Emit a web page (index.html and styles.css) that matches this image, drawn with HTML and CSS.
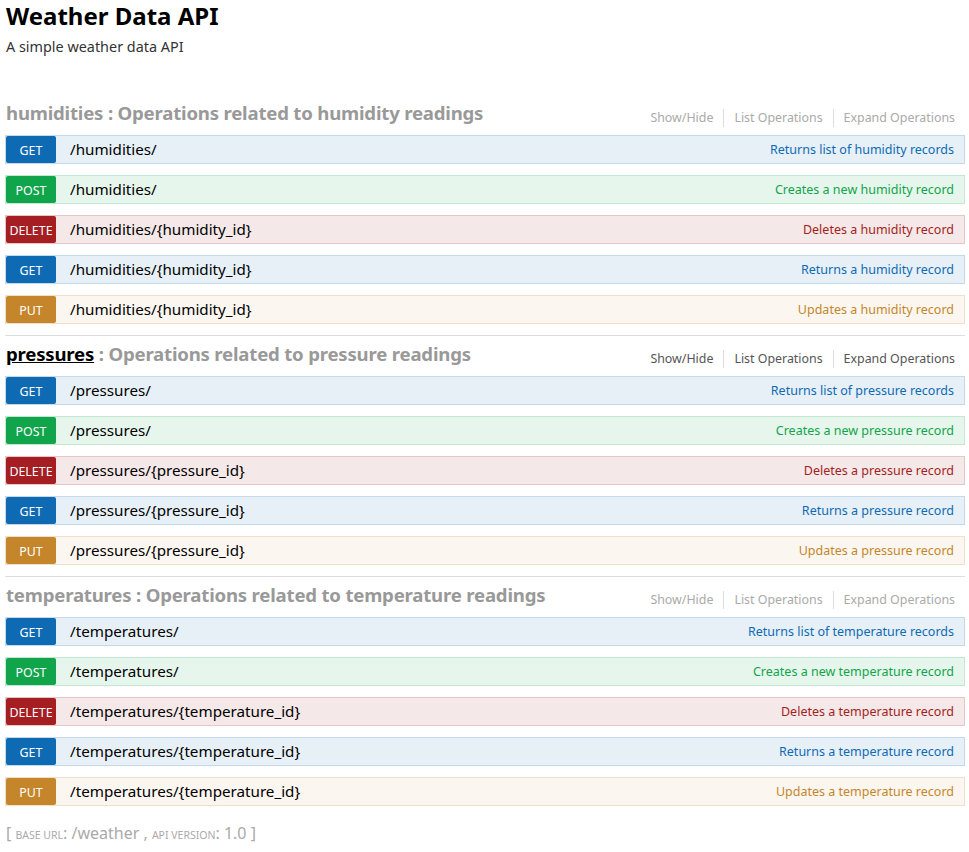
FILE: index.html
```html
<!DOCTYPE html>
<html>
<head>
<meta charset="utf-8">
<title>Weather Data API</title>
<link rel="stylesheet" href="styles.css">
</head>
<body>
<div class="wrap">
  <div class="info">
    <h1 class="info-title">Weather Data API</h1>
    <div class="info-desc">A simple weather data API</div>
  </div>
  <ul class="resources">
    <li class="resource">
      <div class="res-head">
        <h2 class="res-title"><a class="res-name">humidities</a> : Operations related to humidity readings</h2>
        <ul class="options">
          <li>Show/Hide</li>
          <li>List Operations</li>
          <li>Expand Operations</li>
        </ul>
      </div>
      <ul class="ops">
        <li class="op get"><span class="method">GET</span><span class="path">/humidities/</span><span class="summary">Returns list of humidity records</span></li>
        <li class="op post"><span class="method">POST</span><span class="path">/humidities/</span><span class="summary">Creates a new humidity record</span></li>
        <li class="op delete"><span class="method">DELETE</span><span class="path">/humidities/{humidity_id}</span><span class="summary">Deletes a humidity record</span></li>
        <li class="op get"><span class="method">GET</span><span class="path">/humidities/{humidity_id}</span><span class="summary">Returns a humidity record</span></li>
        <li class="op put"><span class="method">PUT</span><span class="path">/humidities/{humidity_id}</span><span class="summary">Updates a humidity record</span></li>
      </ul>
    </li>
    <li class="resource active">
      <div class="res-head">
        <h2 class="res-title"><a class="res-name">pressures</a> : Operations related to pressure readings</h2>
        <ul class="options">
          <li>Show/Hide</li>
          <li>List Operations</li>
          <li>Expand Operations</li>
        </ul>
      </div>
      <ul class="ops">
        <li class="op get"><span class="method">GET</span><span class="path">/pressures/</span><span class="summary">Returns list of pressure records</span></li>
        <li class="op post"><span class="method">POST</span><span class="path">/pressures/</span><span class="summary">Creates a new pressure record</span></li>
        <li class="op delete"><span class="method">DELETE</span><span class="path">/pressures/{pressure_id}</span><span class="summary">Deletes a pressure record</span></li>
        <li class="op get"><span class="method">GET</span><span class="path">/pressures/{pressure_id}</span><span class="summary">Returns a pressure record</span></li>
        <li class="op put"><span class="method">PUT</span><span class="path">/pressures/{pressure_id}</span><span class="summary">Updates a pressure record</span></li>
      </ul>
    </li>
    <li class="resource">
      <div class="res-head">
        <h2 class="res-title"><a class="res-name">temperatures</a> : Operations related to temperature readings</h2>
        <ul class="options">
          <li>Show/Hide</li>
          <li>List Operations</li>
          <li>Expand Operations</li>
        </ul>
      </div>
      <ul class="ops">
        <li class="op get"><span class="method">GET</span><span class="path">/temperatures/</span><span class="summary">Returns list of temperature records</span></li>
        <li class="op post"><span class="method">POST</span><span class="path">/temperatures/</span><span class="summary">Creates a new temperature record</span></li>
        <li class="op delete"><span class="method">DELETE</span><span class="path">/temperatures/{temperature_id}</span><span class="summary">Deletes a temperature record</span></li>
        <li class="op get"><span class="method">GET</span><span class="path">/temperatures/{temperature_id}</span><span class="summary">Returns a temperature record</span></li>
        <li class="op put"><span class="method">PUT</span><span class="path">/temperatures/{temperature_id}</span><span class="summary">Updates a temperature record</span></li>
      </ul>
    </li>
  </ul>
  <div class="footer">[ <span class="sc">base url</span>: /weather , <span class="sc">api version</span>: 1.0 ]</div>
</div>
</body>
</html>
```

FILE: styles.css
```css
* { box-sizing: border-box; }
html, body { margin: 0; padding: 0; background: #fff; }
body {
  font-family: "Noto Sans", "Open Sans", "DejaVu Sans", sans-serif;
  color: #333;
}
.wrap {
  width: 960px;
  margin-left: 5px;
}
.info { padding: 0 1px; }
.info-title {
  margin: 0;
  font-size: 24px;
  line-height: 32px;
  font-weight: bold;
  color: #000;
}
.info-desc {
  margin-top: 5px;
  font-size: 14.4px;
  line-height: 20px;
  color: #333;
}
.resources {
  list-style: none;
  margin: 38px 0 0;
  padding: 0;
}
.resource {
  border-bottom: 1px solid #ddd;
}
.resource:last-child { border-bottom: none; }
.res-head {
  display: flex;
  justify-content: space-between;
  align-items: flex-start;
  height: 40px;
}
.res-title {
  margin: 0;
  padding: 6px 0 0 1px;
  font-size: 18.6px;
  letter-spacing: -0.2px;
  line-height: 24px;
  font-weight: bold;
  color: #999;
}
.res-name { color: #999; text-decoration: none; }
.active .res-name { color: #000; text-decoration: underline; }
.options {
  list-style: none;
  display: flex;
  margin: 0;
  padding: 14px 0 0;
}
.options li {
  font-size: 12.4px;
  line-height: 18px;
  color: #aaa;
  padding: 0 10px;
  border-right: 1px solid #ddd;
}
.options li:last-child { border-right: none; }
.active .options li { color: #555; }
.ops {
  list-style: none;
  margin: 0;
  padding: 0;
}
.op {
  display: flex;
  align-items: center;
  height: 29px;
  margin-bottom: 11px;
  border: 1px solid;
}
.method {
  width: 50px;
  height: 27px;
  border-radius: 2px;
  color: #fff;
  font-size: 12.4px;
  line-height: 29px;
  text-align: center;
  flex: none;
}
.path {
  padding-left: 14px;
  padding-bottom: 2px;
  font-size: 15.2px;
  color: #000;
}
.summary {
  margin-left: auto;
  padding-right: 10px;
  font-size: 12.5px;
}
.get { background: #e7f0f7; border-color: #c3d9ec; }
.get .method { background: #0f6ab4; }
.get .summary { color: #0f6ab4; }
.post { background: #e7f6ec; border-color: #c3e8d1; }
.post .method { background: #10a54a; }
.post .summary { color: #10a54a; }
.delete { background: #f5e8e8; border-color: #e8c6c7; }
.delete .method { background: #a41e22; }
.delete .summary { color: #a41e22; }
.put { background: #fcf6f0; border-color: #f0e0ca; }
.put .method { background: #c5862b; }
.put .summary { color: #c5862b; }
.footer {
  margin-top: 15px;
  padding-left: 1px;
  font-size: 16px;
  line-height: 24px;
  color: #aaa;
}
.sc { font-size: 10.5px; text-transform: uppercase; }
```
